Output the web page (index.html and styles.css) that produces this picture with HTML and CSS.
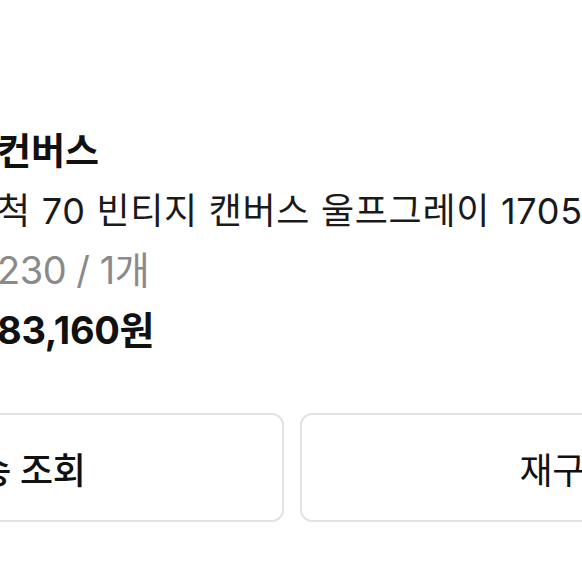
FILE: index.html
```html
<!DOCTYPE html>
<html lang="ko">
<head>
<meta charset="utf-8">
<link rel="stylesheet" href="styles.css">
</head>
<body>
<div class="viewport">
  <div class="card">
    <div class="product">
      <div class="thumb"></div>
      <div class="info">
        <div class="brand">컨버스</div>
        <div class="name">척 70 빈티지 캔버스 울프그레이 170535C</div>
        <div class="option">230 / 1개</div>
        <div class="price">83,160원</div>
      </div>
    </div>
    <div class="actions">
      <button class="btn btn-strong">배송 조회</button>
      <button class="btn">재구매</button>
    </div>
  </div>
</div>
</body>
</html>
```

FILE: styles.css
```css
html, body {
  margin: 0;
  padding: 0;
  background: #ffffff;
}
.viewport {
  width: 582px;
  height: 582px;
  overflow: hidden;
}
.card {
  margin-left: -253px;
  width: 1090px;
  padding-top: 130px;
  font-family: "Inter", "Noto Sans CJK KR", sans-serif;
  color: #111;
}
.product {
  display: flex;
  gap: 30px;
}
.thumb {
  width: 220px;
  height: 220px;
  flex: none;
}
.info {
  display: flex;
  flex-direction: column;
  gap: 15px;
  white-space: nowrap;
}
.brand {
  font-size: 37px;
  line-height: 44px;
  font-weight: 700;
  letter-spacing: 0;
}
.name {
  font-size: 36px;
  line-height: 44px;
  font-weight: 400;
  letter-spacing: 0.7px;
  color: #1a1a1a;
}
.option {
  font-size: 38px;
  line-height: 44px;
  color: #8a8a8a;
  letter-spacing: -0.5px;
}
.price {
  font-size: 38px;
  line-height: 44px;
  font-weight: 700;
  letter-spacing: -0.3px;
  margin-top: 1px;
}
.actions {
  display: grid;
  grid-template-columns: 537px 537px;
  gap: 16px;
  margin-top: 61px;
}
.btn {
  height: 109px;
  border: 2px solid #e2e2e2;
  border-radius: 12px;
  background: #fff;
  font-family: inherit;
  font-size: 36px;
  color: #111;
  letter-spacing: -0.5px;
  padding: 0;
}
.btn-strong {
  font-weight: 500;
}
```
